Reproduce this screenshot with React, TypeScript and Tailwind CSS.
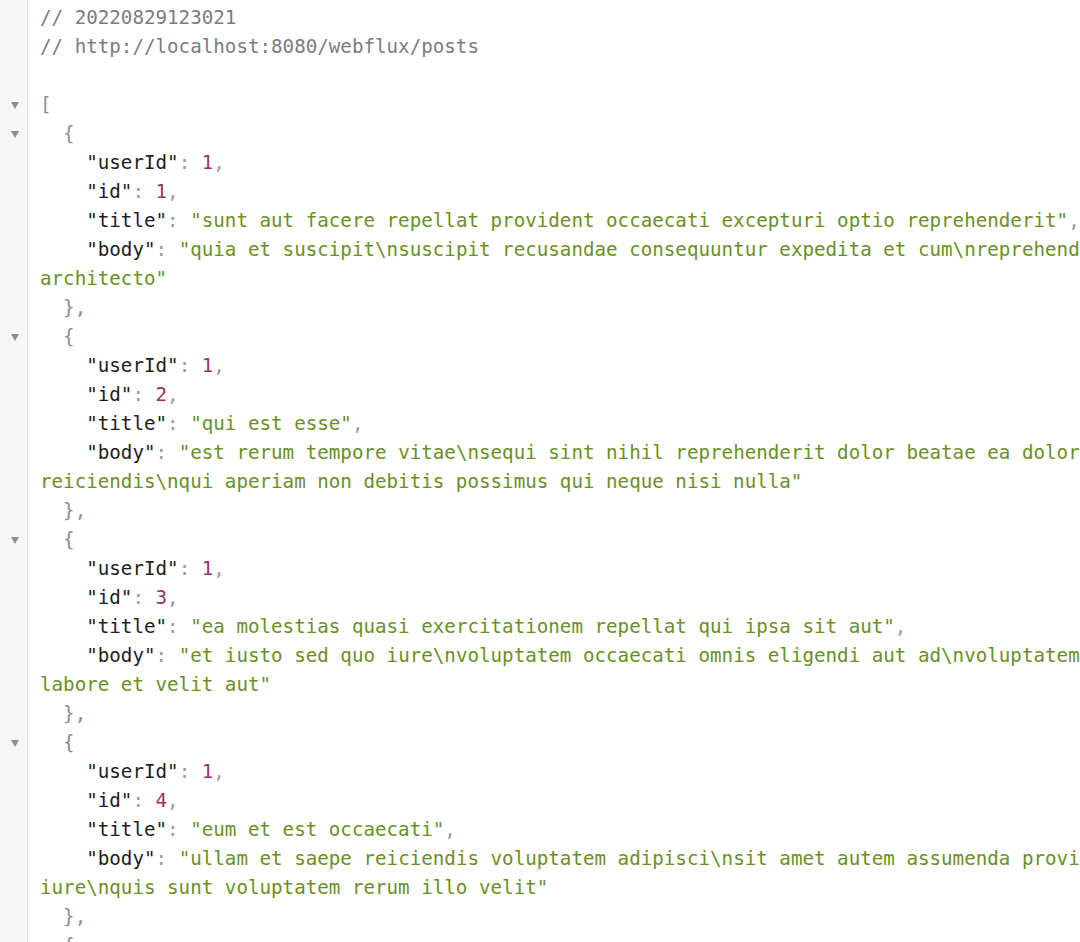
type Tok = [string, string];

const C = {
  cm: "text-[#7c7c7c]",
  br: "text-[#8c8c8c]",
  key: "text-[#1e1e1e]",
  punc: "text-[#9a9a9a]",
  num: "text-[#a0305e]",
  str: "text-[#6a9023]",
};

type Line = { fold?: boolean; toks: Tok[] };

const posts = [
  {
    id: "1",
    title: "sunt aut facere repellat provident occaecati excepturi optio reprehenderit",
    body1:
      "quia et suscipit\\nsuscipit recusandae consequuntur expedita et cum\\nreprehenderit molestiae ut ut quas totam\\nnostrum rerum est autem sunt rem eveniet ",
    body2: "architecto",
  },
  {
    id: "2",
    title: "qui est esse",
    body1:
      "est rerum tempore vitae\\nsequi sint nihil reprehenderit dolor beatae ea dolores neque\\nfugiat blanditiis voluptate porro vel nihil molestiae ut ",
    body2: "reiciendis\\nqui aperiam non debitis possimus qui neque nisi nulla",
  },
  {
    id: "3",
    title: "ea molestias quasi exercitationem repellat qui ipsa sit aut",
    body1:
      "et iusto sed quo iure\\nvoluptatem occaecati omnis eligendi aut ad\\nvoluptatem doloribus vel accusantium quis pariatur\\nmolestiae porro eius odio et ",
    body2: "labore et velit aut",
  },
  {
    id: "4",
    title: "eum et est occaecati",
    body1:
      "ullam et saepe reiciendis voluptatem adipisci\\nsit amet autem assumenda provident rerum culpa\\nquis hic commodi nesciunt rem tenetur doloremque ipsam ",
    body2: "iure\\nquis sunt voluptatem rerum illo velit",
  },
];

function buildLines(): Line[] {
  const lines: Line[] = [
    { toks: [[C.cm, "// 20220829123021"]] },
    { toks: [[C.cm, "// http://localhost:8080/webflux/posts"]] },
    { toks: [[C.cm, " "]] },
    { fold: true, toks: [[C.br, "["]] },
  ];
  posts.forEach((p) => {
    lines.push({ fold: true, toks: [[C.br, "  {"]] });
    lines.push({
      toks: [
        [C.key, '    "userId"'],
        [C.punc, ": "],
        [C.num, "1"],
        [C.punc, ","],
      ],
    });
    lines.push({
      toks: [
        [C.key, '    "id"'],
        [C.punc, ": "],
        [C.num, p.id],
        [C.punc, ","],
      ],
    });
    lines.push({
      toks: [
        [C.key, '    "title"'],
        [C.punc, ": "],
        [C.str, `"${p.title}"`],
        [C.punc, ","],
      ],
    });
    lines.push({
      toks: [
        [C.key, '    "body"'],
        [C.punc, ": "],
        [C.str, `"${p.body1}`],
      ],
    });
    lines.push({ toks: [[C.str, `${p.body2}"`]] });
    lines.push({ toks: [[C.br, "  },"]] });
  });
  lines.push({ fold: true, toks: [[C.br, "  {"]] });
  return lines;
}

export default function App() {
  const lines = buildLines();
  return (
    <div className="w-[1080px] h-[942px] overflow-hidden bg-white flex">
      <div className="w-[28px] shrink-0 bg-[#f6f6f6] border-r border-[#e6e6e6] pt-[3px]">
        {lines.map((l, i) => (
          <div key={i} className="h-[29px] flex items-center justify-center">
            {l.fold && (
              <svg width="8" height="7" viewBox="0 0 8 7" className="ml-[2px] mt-[1px]">
                <path d="M0 0 L8 0 L4 7 Z" fill="#8e8e8e" />
              </svg>
            )}
          </div>
        ))}
      </div>
      <div
        className="pl-[12px] pt-[3px] text-[19.2px] leading-[29px] whitespace-pre"
        style={{ fontFamily: '"DejaVu Sans Mono", "Liberation Mono", monospace' }}
      >
        {lines.map((l, i) => (
          <div key={i} className="h-[29px]">
            {l.toks.map(([cls, t], j) => (
              <span key={j} className={cls}>
                {t}
              </span>
            ))}
          </div>
        ))}
      </div>
    </div>
  );
}
